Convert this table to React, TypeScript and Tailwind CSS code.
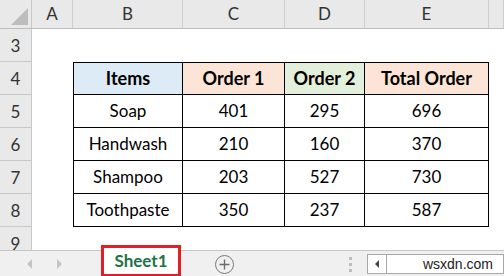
import React from "react";

const cols = ["A", "B", "C", "D", "E", ""];
const widths = ["w-[41px]", "w-[110px]", "w-[102px]", "w-[80px]", "w-[124px]", "flex-1"];

const headers = [
  { label: "Items", bg: "bg-[#ddebf7]" },
  { label: "Order 1", bg: "bg-[#fce4d6]" },
  { label: "Order 2", bg: "bg-[#e2efda]" },
  { label: "Total Order", bg: "bg-[#fce4d6]" },
];

const rows = [
  ["Soap", "401", "295", "696"],
  ["Handwash", "210", "160", "370"],
  ["Shampoo", "203", "527", "730"],
  ["Toothpaste", "350", "237", "587"],
];

function RowHead({ n }: { n: number }) {
  return (
    <div className="w-[32px] shrink-0 h-full flex items-center justify-center pt-[2px] bg-[#e9e9e9] border-r border-b border-[#c8c8c8] text-[17px] text-[#333]">
      {n}
    </div>
  );
}

function App() {
  return (
    <div
      className="w-[504px] h-[276px] overflow-hidden bg-white flex flex-col"
      style={{ fontFamily: "Lato, 'Open Sans', sans-serif" }}
    >
      {/* column headers */}
      <div className="h-[29px] shrink-0 flex bg-[#e9e9e9] border-b border-[#bdbdbd]">
        <div className="w-[32px] shrink-0 relative border-r border-[#c8c8c8]">
          <div className="absolute right-[3px] bottom-[3px] w-0 h-0 border-l-[17px] border-l-transparent border-b-[17px] border-b-[#bdbdbd]" />
        </div>
        {cols.map((c, i) => (
          <div
            key={i}
            className={`${widths[i]} shrink-0 flex items-center justify-center border-r border-[#cfcfcf] text-[17px] text-[#333]`}
          >
            {c}
          </div>
        ))}
      </div>

      {/* grid body */}
      <div className="h-[221px] shrink-0 overflow-hidden flex flex-col">
        <div className="h-[33px] shrink-0 flex">
          <RowHead n={3} />
        </div>
        <div className="h-[33px] shrink-0 flex">
          <RowHead n={4} />
          <div className="w-[41px] shrink-0" />
          {headers.map((h, i) => (
            <div
              key={h.label}
              className={`${widths[i + 1]} shrink-0 ${h.bg} flex items-center justify-center border-t border-b border-r border-black ${i === 0 ? "border-l" : ""} text-[18px] font-bold text-black`}
            >
              {h.label}
            </div>
          ))}
        </div>
        {rows.map((r, ri) => (
          <div key={ri} className="h-[33px] shrink-0 flex">
            <RowHead n={ri + 5} />
            <div className="w-[41px] shrink-0" />
            {r.map((v, i) => (
              <div
                key={i}
                className={`${widths[i + 1]} shrink-0 flex items-center justify-center border-b border-r border-black ${i === 0 ? "border-l" : ""} text-[17px] text-black`}
              >
                {v}
              </div>
            ))}
          </div>
        ))}
        <div className="h-[33px] shrink-0 flex">
          <RowHead n={9} />
        </div>
      </div>

      {/* sheet tab bar */}
      <div className="flex-1 flex items-center bg-[#f0f0f0] border-t border-[#c6c6c6]">
        <div className="w-[101px] shrink-0 flex items-center">
          <span className="ml-[27px] w-0 h-0 border-y-[5px] border-y-transparent border-r-[5px] border-r-[#c4c4c4]" />
          <span className="ml-[25px] w-0 h-0 border-y-[5px] border-y-transparent border-l-[5px] border-l-[#c4c4c4]" />
        </div>
        <div className="w-[80px] h-[32px] -mt-[6px] shrink-0 bg-white border-[3px] border-[#e01f26] flex items-center justify-center text-[17px] font-bold text-[#217346]">
          Sheet1
        </div>
        <div className="w-[86px] shrink-0 flex justify-center">
          <div className="w-[19px] h-[19px] rounded-full border border-[#7a7a7a] flex items-center justify-center text-[#6a6a6a]">
            <svg width="11" height="11" viewBox="0 0 10 10">
              <path d="M5 0.5v9M0.5 5h9" stroke="currentColor" strokeWidth="1.2" />
            </svg>
          </div>
        </div>
        <div className="flex-1" />
        <div className="flex flex-col gap-[3px] mr-[15px]">
          <span className="w-[3px] h-[3px] bg-[#bdbdbd]" />
          <span className="w-[3px] h-[3px] bg-[#bdbdbd]" />
          <span className="w-[3px] h-[3px] bg-[#bdbdbd]" />
        </div>
        <div className="w-[137px] h-[20px] shrink-0 bg-white border border-[#a8a8a8] flex items-stretch">
          <div className="w-[19px] border-r border-[#a8a8a8] flex items-center justify-center">
            <span className="w-0 h-0 border-y-[4px] border-y-transparent border-r-[4px] border-r-[#444]" />
          </div>
          <div
            className="flex-1 flex items-center justify-end pr-[10px] text-[14px] text-[#222]"
            style={{ fontFamily: "'Liberation Sans', Arial, sans-serif" }}
          >
            wsxdn.com
          </div>
        </div>
      </div>
    </div>
  );
}

export default App;
